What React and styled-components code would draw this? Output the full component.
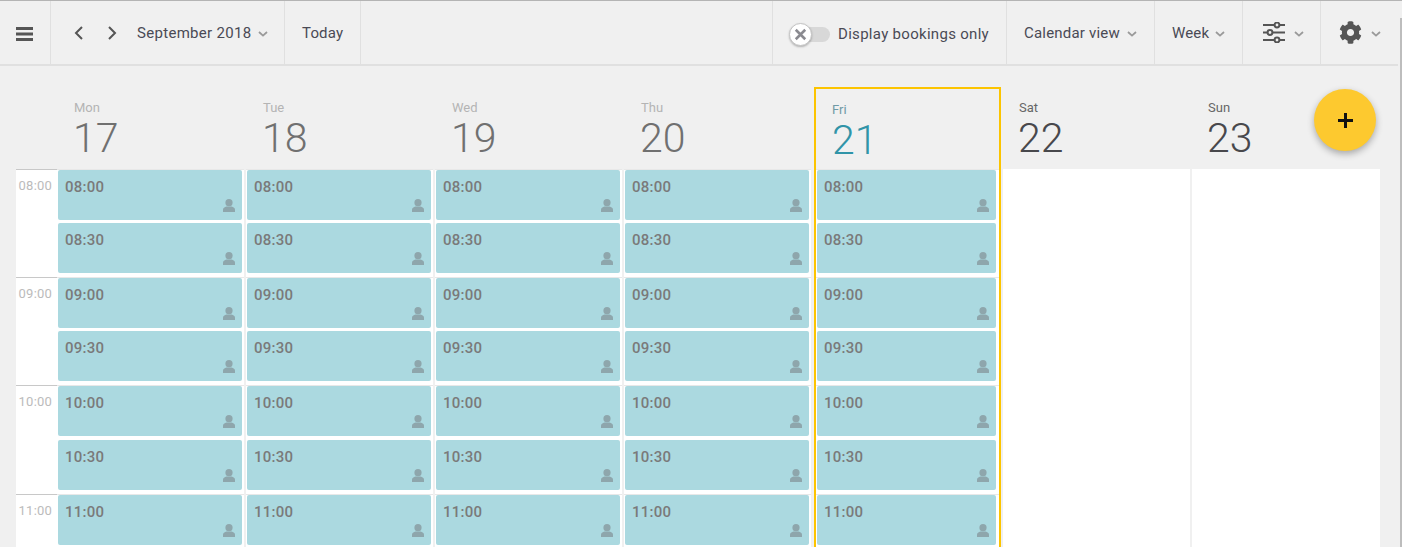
import React from 'react';
import styled, { createGlobalStyle } from 'styled-components';
import { FaCog } from 'react-icons/fa';

const Global = createGlobalStyle`
  html, body { margin: 0; padding: 0; background: #f0f0f0; }
  body { font-family: Roboto, "Liberation Sans", sans-serif; }
`;

const Page = styled.div`
  position: relative;
  width: 1402px;
  height: 547px;
  overflow: hidden;
  background: #f0f0f0;
  border-top: 1px solid #b4b4b4;
  box-sizing: border-box;
`;
const Scrollbar = styled.div`
  position: absolute;
  right: 0;
  top: 17px;
  bottom: 0;
  width: 2px;
  background: #bdbdbd;
`;
const Toolbar = styled.header`
  display: flex;
  width: 1398px;
  height: 65px;
  box-sizing: border-box;
  border-bottom: 2px solid #e0e0e0;
  color: #4a4a55;
`;
const Section = styled.div`
  display: flex;
  align-items: center;
  box-sizing: border-box;
  width: ${p => p.$w}px;
  flex: none;
  padding-left: ${p => p.$pl || 0}px;
  border-right: ${p => (p.$end ? 0 : '1px solid #e0e0e0')};
`;
const Spacer = styled.div`
  flex: 1;
  border-right: 1px solid #e0e0e0;
`;
const Label = styled.span`
  font-size: 15px;
  letter-spacing: ${p => p.$ls ?? 0.15}px;
  line-height: 20px;
  white-space: nowrap;
  margin-left: ${p => p.$ml || 0}px;
  margin-top: ${p => p.$mt || 0}px;
`;
const Caret = styled.svg`
  width: 10px;
  height: 6px;
  flex: none;
  margin-left: ${p => p.$ml || 7}px;
  margin-top: 3px;
`;
const DownCaret = ({ ml }) => (
  <Caret $ml={ml} viewBox="0 0 10 6">
    <path d="M1 1l4 3.6L9 1" fill="none" stroke="#9a9a9a" strokeWidth="1.8" />
  </Caret>
);
const Burger = styled.svg`width: 17px; height: 14px; flex: none; margin-top: 2px;`;
const NavArrow = styled.svg`
  width: 10px;
  height: 14px;
  flex: none;
  margin-left: ${p => p.$ml}px;
`;
const SliderIcon = styled.svg`width: 22px; height: 21px; flex: none;`;
const Gear = styled(FaCog)`
  width: 23px;
  height: 23px;
  color: #555;
  flex: none;
`;
const Switch = styled.div`
  position: relative;
  width: 41px;
  height: 15px;
  margin: 3px 8px 0 0;
  flex: none;
`;
const Track = styled.div`
  position: absolute;
  left: 2px;
  right: 0;
  top: 0;
  bottom: 0;
  border-radius: 8px;
  background: #d8d8d8;
`;
const Knob = styled.div`
  position: absolute;
  left: 0;
  top: -4px;
  width: 23px;
  height: 23px;
  box-sizing: border-box;
  border-radius: 50%;
  background: #fff;
  border: 1px solid #c4c4c4;
  box-shadow: 0 1px 2px rgba(0,0,0,.25);
  display: flex;
  align-items: center;
  justify-content: center;
`;
const Cross = styled.svg`width: 13px; height: 13px;`;

const Main = styled.main`
  display: grid;
  grid-template-columns: 41px repeat(7, 189px);
  margin: 21px 0 0 16px;
  width: 1364px;
`;
const TimeColumn = styled.div`
  padding-top: 82px;
`;
const HourLabel = styled.div`
  height: 108.2px;
  box-sizing: border-box;
  background: #fff;
  border-top: 1px solid #c8c8c8;
  color: #bbb;
  font-size: 13px;
  letter-spacing: 0.2px;
  text-align: right;
  padding: 8px 5px 0 0;
  line-height: 15px;
`;
const DayColumn = styled.section`
  box-sizing: border-box;
  ${p => p.$today && `
    margin: 0 1px;
    border: 2px solid #fcc400;
    border-bottom: 0;
    width: 187px;
  `}
`;
const DayHead = styled.div`
  height: ${p => (p.$today ? 80 : 82)}px;
  box-sizing: border-box;
  padding: 13px 0 0 ${p => (p.$today ? 16 : 17)}px;
`;
const DayName = styled.div`
  font-size: 13px;
  line-height: 15px;
  color: ${p => p.$color};
`;
const DayNumber = styled.div`
  font-size: 41px;
  line-height: 41px;
  margin: 3px 0 0 ${p => (p.$today ? 0 : -1)}px;
  font-weight: 300;
  color: ${p => p.$color};
`;
const DayBody = styled.div`
  background: #fff;
  box-sizing: border-box;
  ${p => p.$kind === 'past' && 'width: 189px; border-right: 2px solid #f0f0f0;'}
  ${p => p.$kind === 'today' && 'width: 183px;'}
  ${p => p.$kind === 'future' && 'width: 189px; margin-left: 1px; border-right: 2px solid #f0f0f0;'}
  ${p => p.$last && 'width: 188px; border-right: 0;'}
`;
const HourBlock = styled.div`
  height: 108.2px;
  box-sizing: border-box;
  border-top: 1px solid ${p => (p.$line ? '#e8e8e8' : '#fff')};
  padding: 0 ${p => (p.$today ? 3 : 2)}px 0 1px;
`;
const Slot = styled.div`
  position: relative;
  height: 50px;
  margin-bottom: 3.25px;
  background: #abd9e0;
  border-radius: 2px;
  color: #7a7a7a;
  font-size: 15px;
  font-weight: 500;
  letter-spacing: 0.25px;
  padding: 9px 0 0 7px;
  box-sizing: border-box;
  line-height: 16px;
`;
const Person = styled.svg`
  position: absolute;
  right: 7px;
  bottom: 8px;
  width: 12px;
  height: 13px;
`;
const Fab = styled.button`
  position: absolute;
  left: 1314px;
  top: 88px;
  width: 62px;
  height: 62px;
  border: 0;
  border-radius: 50%;
  background: #fdc92f;
  box-shadow: 0 3px 7px rgba(0,0,0,.3);
  display: flex;
  align-items: center;
  justify-content: center;
  padding: 0;
`;
const Plus = styled.svg`width: 15px; height: 15px;`;

const days = [
  { n: 'Mon', d: 17, kind: 'past', slots: true },
  { n: 'Tue', d: 18, kind: 'past', slots: true },
  { n: 'Wed', d: 19, kind: 'past', slots: true },
  { n: 'Thu', d: 20, kind: 'past', slots: true },
  { n: 'Fri', d: 21, kind: 'today', slots: true },
  { n: 'Sat', d: 22, kind: 'future' },
  { n: 'Sun', d: 23, kind: 'future', last: true },
];
const nameColors = { past: '#b4b4b4', today: '#6f9aa6', future: '#666' };
const numberColors = { past: '#707070', today: '#3094a8', future: '#48484c' };
const hours = [
  { h: '08', slots: ['08:00', '08:30'] },
  { h: '09', slots: ['09:00', '09:30'] },
  { h: '10', slots: ['10:00', '10:30'] },
  { h: '11', slots: ['11:00'] },
];

const Booking = ({ time }) => (
  <Slot>
    {time}
    <Person viewBox="0 0 12 13">
      <circle cx="6" cy="3.7" r="3.6" fill="#8ea6ac" />
      <path d="M0 13v-2.6c0-1.5 1.5-2.4 3.5-3h5c2 .6 3.5 1.5 3.5 3V13z" fill="#8ea6ac" />
    </Person>
  </Slot>
);

export default function App() {
  return (
    <Page>
      <Global />
      <Toolbar>
        <Section $w={51} $pl={16}>
          <Burger viewBox="0 0 17 14">
            <path d="M0 0h17v3H0zM0 5.4h17v3H0zM0 11h17v3H0z" fill="#555" />
          </Burger>
        </Section>
        <Section $w={234} $pl={23}>
          <NavArrow $ml={0} viewBox="0 0 10 14">
            <path d="M8 1L2 7l6 6" fill="none" stroke="#555" strokeWidth="2" />
          </NavArrow>
          <NavArrow $ml={23} viewBox="0 0 10 14">
            <path d="M2 1l6 6-6 6" fill="none" stroke="#555" strokeWidth="2" />
          </NavArrow>
          <Label $ml={20} $ls={0.3}>September 2018</Label>
          <DownCaret />
        </Section>
        <Section $w={76} $pl={17}>
          <Label>Today</Label>
        </Section>
        <Spacer />
        <Section $w={234} $pl={16}>
          <Switch>
            <Track />
            <Knob>
              <Cross viewBox="0 0 11 11">
                <path d="M1.5 1.5l8 8M9.5 1.5l-8 8" stroke="#8a8a90" strokeWidth="2.2" />
              </Cross>
            </Knob>
          </Switch>
          <Label $ls={0.3} $mt={2}>Display bookings only</Label>
        </Section>
        <Section $w={148} $pl={17}>
          <Label $ls={0.2}>Calendar view</Label>
          <DownCaret />
        </Section>
        <Section $w={88} $pl={17}>
          <Label>Week</Label>
          <DownCaret ml={6} />
        </Section>
        <Section $w={78} $pl={20}>
          <SliderIcon viewBox="0 0 22 21">
            <g fill="none" stroke="#555" strokeWidth="2">
              <path d="M0 3h11M17 3h5M0 10.5h4M10 10.5h12M0 18h11M17 18h5" />
              <circle cx="14" cy="3" r="2.4" />
              <circle cx="7" cy="10.5" r="2.4" />
              <circle cx="14" cy="18" r="2.4" />
            </g>
          </SliderIcon>
          <DownCaret ml={9} />
        </Section>
        <Section $w={77} $pl={18} $end>
          <Gear />
          <DownCaret ml={9} />
        </Section>
      </Toolbar>
      <Main>
        <TimeColumn>
          {hours.map(({ h }) => (
            <HourLabel key={h}>{h}:00</HourLabel>
          ))}
        </TimeColumn>
        {days.map(day => {
          const today = day.kind === 'today';
          return (
            <DayColumn key={day.n} $today={today}>
              <DayHead $today={today}>
                <DayName $color={nameColors[day.kind]}>{day.n}</DayName>
                <DayNumber $today={today} $color={numberColors[day.kind]}>{day.d}</DayNumber>
              </DayHead>
              <DayBody $kind={day.kind} $last={day.last}>
                {hours.map(({ h, slots }) => (
                  <HourBlock key={h} $today={today} $line={day.slots}>
                    {day.slots && slots.map(t => <Booking key={t} time={t} />)}
                  </HourBlock>
                ))}
              </DayBody>
            </DayColumn>
          );
        })}
      </Main>
      <Fab aria-label="Add">
        <Plus viewBox="0 0 14 14">
          <path d="M7 0v14M0 7h14" stroke="#111" strokeWidth="2.8" />
        </Plus>
      </Fab>
      <Scrollbar />
    </Page>
  );
}
